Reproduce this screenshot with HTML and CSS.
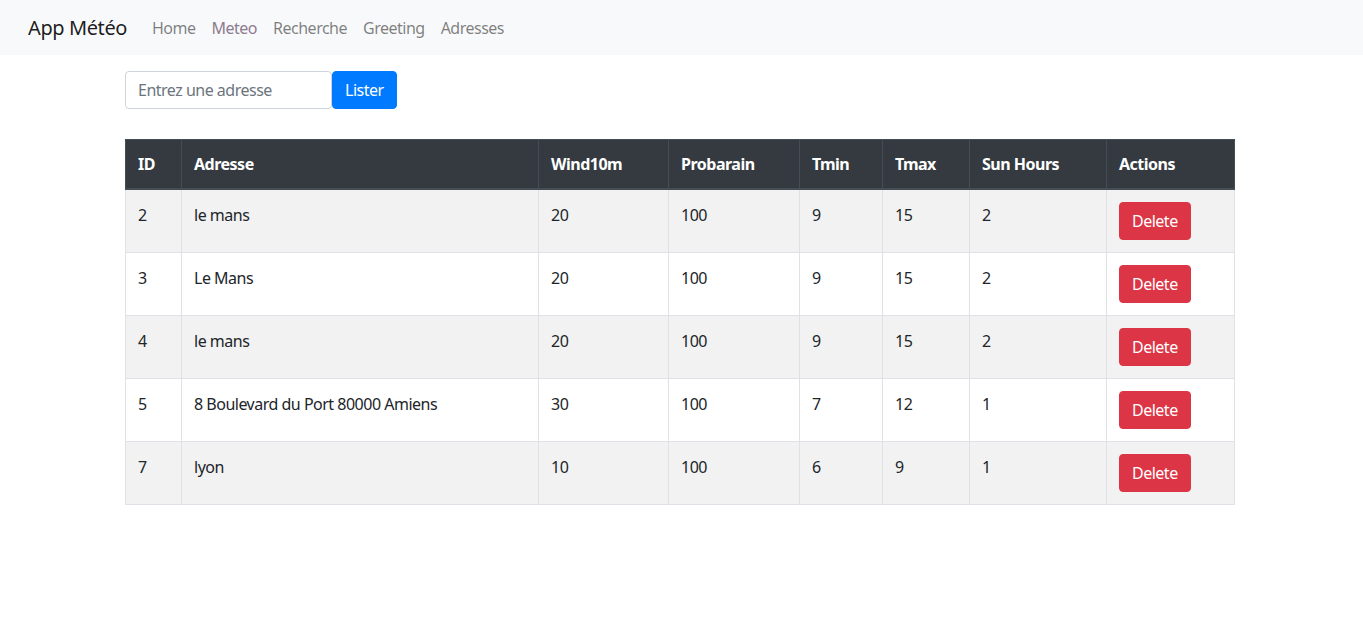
FILE: index.html
```html
<!DOCTYPE html>
<html lang="fr">
<head>
<meta charset="utf-8">
<title>App Météo</title>
<link rel="stylesheet" href="styles.css">
</head>
<body>
<nav class="navbar">
  <a class="brand" href="#">App Météo</a>
  <ul class="nav">
    <li><a class="nav-link" href="#">Home</a></li>
    <li><a class="nav-link visited" href="#">Meteo</a></li>
    <li><a class="nav-link" href="#">Recherche</a></li>
    <li><a class="nav-link" href="#">Greeting</a></li>
    <li><a class="nav-link" href="#">Adresses</a></li>
  </ul>
</nav>
<main class="container">
  <form class="search">
    <input class="input" type="text" placeholder="Entrez une adresse">
    <button class="btn btn-primary" type="button">Lister</button>
  </form>
  <table class="table">
    <colgroup>
      <col class="c-id"><col class="c-adr"><col class="c-wind"><col class="c-prob"><col class="c-tmin"><col class="c-tmax"><col class="c-sun"><col class="c-act">
    </colgroup>
    <thead>
      <tr><th>ID</th><th>Adresse</th><th>Wind10m</th><th>Probarain</th><th>Tmin</th><th>Tmax</th><th>Sun Hours</th><th>Actions</th></tr>
    </thead>
    <tbody>
      <tr><td>2</td><td>le mans</td><td>20</td><td>100</td><td>9</td><td>15</td><td>2</td><td class="act"><button class="btn btn-danger" type="button">Delete</button></td></tr>
      <tr><td>3</td><td>Le Mans</td><td>20</td><td>100</td><td>9</td><td>15</td><td>2</td><td class="act"><button class="btn btn-danger" type="button">Delete</button></td></tr>
      <tr><td>4</td><td>le mans</td><td>20</td><td>100</td><td>9</td><td>15</td><td>2</td><td class="act"><button class="btn btn-danger" type="button">Delete</button></td></tr>
      <tr><td>5</td><td>8 Boulevard du Port 80000 Amiens</td><td>30</td><td>100</td><td>7</td><td>12</td><td>1</td><td class="act"><button class="btn btn-danger" type="button">Delete</button></td></tr>
      <tr><td>7</td><td>lyon</td><td>10</td><td>100</td><td>6</td><td>9</td><td>1</td><td class="act"><button class="btn btn-danger" type="button">Delete</button></td></tr>
    </tbody>
  </table>
</main>
</body>
</html>
```

FILE: styles.css
```css
* { box-sizing: border-box; }
html, body { margin: 0; padding: 0; }
body {
  font-family: "Noto Sans", "Open Sans", "Liberation Sans", sans-serif;
  font-size: 16px;
  line-height: 1.5;
  letter-spacing: -0.5px;
  color: #212529;
  background: #fff;
}
.navbar {
  display: flex;
  align-items: center;
  height: 55px;
  padding: 0 16px 0 28px;
  background: #f8f9fa;
}
.brand {
  font-size: 20px;
  line-height: 30px;
  letter-spacing: -0.4px;
  color: rgba(0,0,0,.9);
  text-decoration: none;
  margin-right: 17px;
}
.nav {
  display: flex;
  list-style: none;
  margin: 0;
  padding: 0;
}
.nav-link {
  display: block;
  padding: 8px;
  color: rgba(0,0,0,.5);
  text-decoration: none;
}
.nav-link.visited { color: #8d7c90; }
.container {
  width: 1110px;
  margin: 0 0 0 125px;
  padding-top: 16px;
}
.search {
  display: flex;
  margin: 0 0 30px 0;
}
.input {
  width: 207px;
  height: 38px;
  padding: 6px 12px;
  font: inherit;
  letter-spacing: inherit;
  color: #495057;
  border: 1px solid #ced4da;
  border-radius: 4px;
  outline: none;
}
.input::placeholder { color: #6c757d; }
.btn {
  display: inline-block;
  height: 38px;
  padding: 6px 12px;
  font: inherit;
  letter-spacing: inherit;
  line-height: 24px;
  color: #fff;
  border: 1px solid transparent;
  border-radius: 4px;
  cursor: pointer;
}
.btn-primary { background: #007bff; border-color: #007bff; }
.btn-danger { background: #dc3545; border-color: #dc3545; }
.table {
  width: 1110px;
  border-collapse: collapse;
  table-layout: fixed;
  border: 1px solid #dee2e6;
}
.c-id { width: 56px; }
.c-adr { width: 357px; }
.c-wind { width: 130px; }
.c-prob { width: 131px; }
.c-tmin { width: 83px; }
.c-tmax { width: 87px; }
.c-sun { width: 137px; }
.c-act { width: 128px; }
.table th, .table td {
  padding: 12px;
  text-align: left;
  vertical-align: top;
  border: 1px solid #dee2e6;
}
.table td { padding-top: 13px; padding-bottom: 11px; }
.table td.act { padding-top: 12px; padding-bottom: 12px; }
.table th {
  background: #343a40;
  color: #fff;
  font-weight: 700;
  border-color: #454d55;
  border-bottom-width: 2px;
}
.table tbody tr:nth-child(odd) { background: #f2f2f2; }
```
